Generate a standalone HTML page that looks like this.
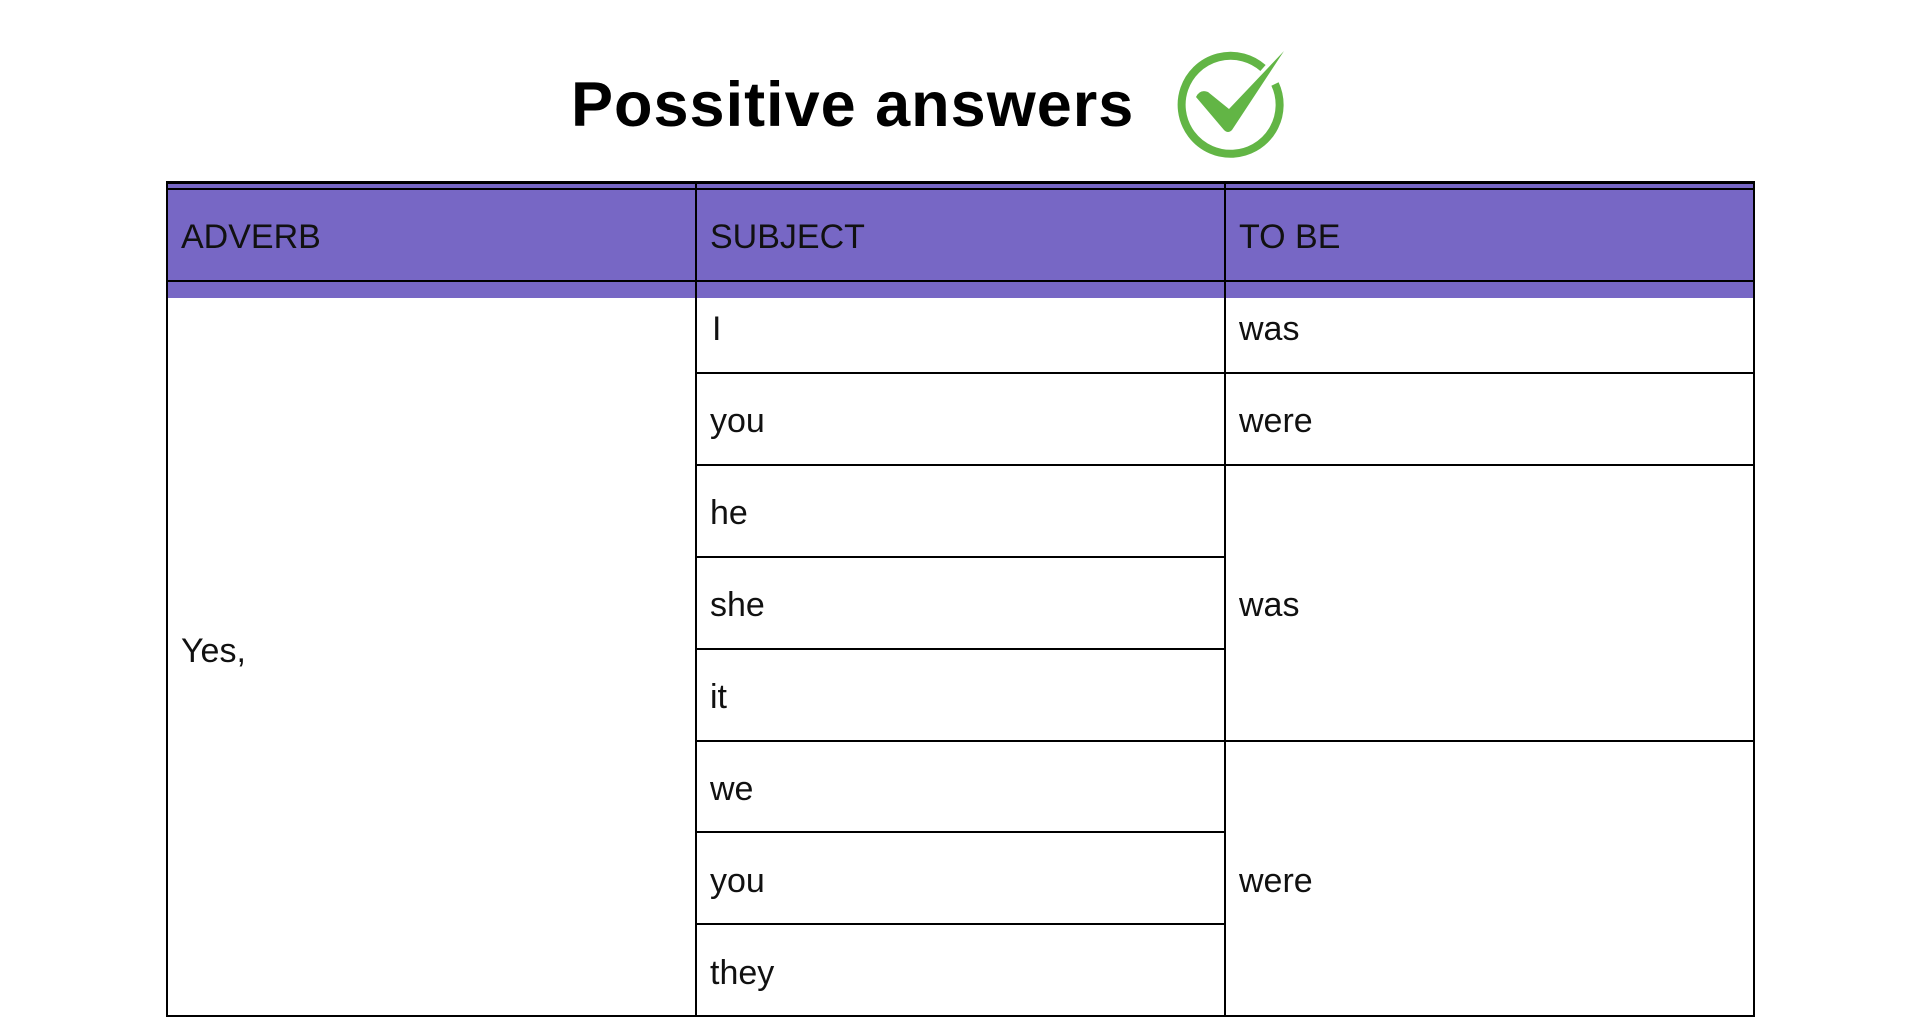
<!DOCTYPE html>
<html><head><meta charset="utf-8"><style>
body{margin:0;width:1920px;height:1024px;background:#fff;position:relative;overflow:hidden;font-family:"Liberation Sans",sans-serif;}
.t{position:absolute;font-size:34px;color:#111;line-height:1;}
.h{position:absolute;background:#000;height:2px;}
.v{position:absolute;background:#000;width:2px;}
</style></head><body>
<div style="position:absolute;left:571px;top:74px;font-size:63px;font-weight:bold;color:#000;line-height:1;letter-spacing:1px">Possitive answers</div>
<svg style="position:absolute;left:1170px;top:44px" width="130" height="120" viewBox="1170 46 130 120">
<path d="M1263 70 A49 49 0 1 0 1275 86" fill="none" stroke="#62b545" stroke-width="8"/>
<path d="M1196 99 Q1200 91 1208 94 L1229 111 L1284 53 L1232 132 Q1228 136 1224 132 Z" fill="#62b545"/>
</svg>
<div style="position:absolute;left:166px;top:181px;width:1588px;height:117px;background:#7767c5"></div>
<div class="h" style="left:166px;top:181px;width:1588px;height:3px"></div>
<div class="h" style="left:166px;top:188px;width:1588px"></div>
<div class="h" style="left:166px;top:280px;width:1588px"></div>
<div class="v" style="left:166px;top:181px;height:836px"></div>
<div class="v" style="left:695px;top:181px;height:836px"></div>
<div class="v" style="left:1224px;top:181px;height:836px"></div>
<div class="v" style="left:1753px;top:181px;height:836px"></div>
<div class="h" style="left:166px;top:1015px;width:1589px"></div>
<div class="h" style="left:695px;top:372px;width:1060px"></div>
<div class="h" style="left:695px;top:464px;width:1060px"></div>
<div class="h" style="left:695px;top:556px;width:530px"></div>
<div class="h" style="left:695px;top:648px;width:530px"></div>
<div class="h" style="left:695px;top:740px;width:1060px"></div>
<div class="h" style="left:695px;top:831px;width:530px"></div>
<div class="h" style="left:695px;top:923px;width:530px"></div>
<div class="t" style="left:181px;top:220px">ADVERB</div>
<div class="t" style="left:710px;top:220px">SUBJECT</div>
<div class="t" style="left:1239px;top:220px">TO BE</div>
<div class="t" style="left:181px;top:634px">Yes,</div>
<div class="t" style="left:712px;top:312px">I</div>
<div class="t" style="left:710px;top:404px">you</div>
<div class="t" style="left:710px;top:496px">he</div>
<div class="t" style="left:710px;top:588px">she</div>
<div class="t" style="left:710px;top:680px">it</div>
<div class="t" style="left:710px;top:772px">we</div>
<div class="t" style="left:710px;top:864px">you</div>
<div class="t" style="left:710px;top:956px">they</div>
<div class="t" style="left:1239px;top:312px">was</div>
<div class="t" style="left:1239px;top:404px">were</div>
<div class="t" style="left:1239px;top:588px">was</div>
<div class="t" style="left:1239px;top:864px">were</div>
</body></html>
